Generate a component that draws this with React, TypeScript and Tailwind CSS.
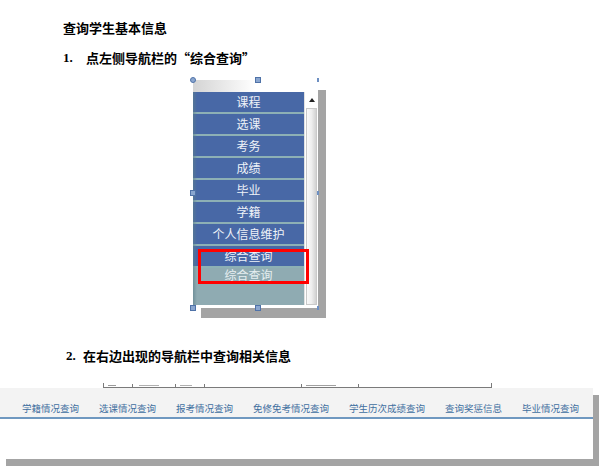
import React from "react"

const menuItems = ["课程", "选课", "考务", "成绩", "毕业", "学籍", "个人信息维护", "综合查询"]

const queryLinks = [
  "学籍情况查询",
  "选课情况查询",
  "报考情况查询",
  "免修免考情况查询",
  "学生历次成绩查询",
  "查询奖惩信息",
  "毕业情况查询",
]

function Handle({ className }: { className: string }) {
  return <div className={`absolute w-[6px] h-[6px] bg-[#8aa6cf] border border-[#4f72a8] ${className}`} />
}

function NavPicture() {
  return (
    <div className="relative ml-[193px] mt-[15px] w-[125px] h-[228px] bg-white shadow-[8px_10px_0_#a4a4a4]">
      {/* white strip above the menu */}
      <div className="h-[12px] bg-gradient-to-r from-[#d4d4d4] via-white to-white" />
      <div className="flex h-[213px]">
        {/* menu column */}
        <div className="relative w-[111px] flex flex-col bg-[#8fabb2]">
          {menuItems.map((item) => (
            <div
              key={item}
              className="h-[22px] border-b-2 border-[#8db0b5] bg-[#4868a6] flex items-center justify-center text-[12px] leading-[20px] text-[#eef2f8]"
            >
              {item}
            </div>
          ))}
          <div className="h-[13px] flex items-center justify-center text-[12px] leading-[13px] text-[#e6eef0]">
            综合查询
          </div>
          <div className="absolute left-0 top-0 bottom-0 w-[4px] bg-gradient-to-r from-[#5d7f8a] to-transparent opacity-60" />
        </div>
        {/* scrollbar */}
        <div className="w-[14px] flex flex-col bg-white border-l border-[#e2e2e2]">
          <div className="h-[16px] flex items-center justify-center">
            <div className="w-0 h-0 border-l-[3px] border-r-[3px] border-b-[4px] border-l-transparent border-r-transparent border-b-[#222]" />
          </div>
          <div className="flex-1 mx-[1px] border border-[#c9c9c9] bg-gradient-to-r from-[#fafafa] via-[#eeeeee] to-[#d2d2d2]" />
        </div>
      </div>
      {/* red highlight */}
      <div className="absolute left-[5px] top-[169px] w-[111px] h-[35px] border-[3px] border-[#ff0000]" />
      {/* selection handles */}
      <Handle className="-left-[3px] -top-[3px] rounded-full" />
      <Handle className="left-[62px] -top-[3px]" />
      <div className="absolute -right-[1px] -top-[2px] w-[2px] h-[4px] bg-[#6d8fc2]" />
      <Handle className="-left-[3px] top-[110px]" />
      <div className="absolute -right-[1px] top-[111px] w-[2px] h-[4px] bg-[#6d8fc2]" />
      <Handle className="-left-[3px] -bottom-[3px]" />
      <Handle className="left-[62px] -bottom-[3px]" />
      <div className="absolute -right-[1px] -bottom-[2px] w-[2px] h-[4px] bg-[#6d8fc2]" />
    </div>
  )
}

export default function App() {
  return (
    <div
      className="w-[600px] h-[470px] bg-white overflow-hidden text-black"
      style={{ fontFamily: '"Noto Sans CJK SC", "Liberation Sans", sans-serif' }}
    >
      <div className="pt-[20px] pl-[63px]">
        <p className="text-[13px] leading-[15px] font-bold">查询学生基本信息</p>
        <p className="mt-[15px] flex items-center text-[13px] leading-[15px] font-bold">
          <span className="w-[23px] font-['Liberation_Serif',serif]">1.</span>
          <span>点左侧导航栏的“综合查询”</span>
        </p>
      </div>

      <NavPicture />

      <p className="mt-[40px] ml-[66px] flex items-center text-[13px] leading-[15px] font-bold">
        <span className="w-[17px] font-['Liberation_Serif',serif]">2.</span>
        <span>在右边出现的导航栏中查询相关信息</span>
      </p>

      {/* cut-off edge of the page above the query bar */}
      <div className="mt-[20px] ml-[103px] w-[389px] h-[5px] flex items-end border-b-[1.5px] border-x border-[#7a7a7a]">
        <div className="ml-[4px] w-[8px] h-[1px] mb-[1px] bg-[#9a9a9a]" />
        <div className="ml-[16px] w-[1px] h-[3px] bg-[#7a7a7a]" />
        <div className="ml-[6px] w-[20px] h-[1px] mb-[1px] bg-[#b0b0b0]" />
        <div className="ml-[16px] w-[1px] h-[3px] bg-[#7a7a7a]" />
        <div className="ml-[4px] w-[12px] h-[1px] mb-[1px] bg-[#b0b0b0]" />
        <div className="ml-[12px] w-[1px] h-[3px] bg-[#7a7a7a]" />
        <div className="ml-[96px] w-[1px] h-[3px] bg-[#7a7a7a]" />
        <div className="ml-[4px] w-[30px] h-[1px] mb-[1px] bg-[#a0a0a0]" />
        <div className="ml-[22px] w-[1px] h-[3px] bg-[#7a7a7a]" />
      </div>

      {/* query bar screenshot */}
      <div className="w-[593px] h-[71px] bg-white shadow-[6px_7px_0_#a4a4a4]">
        <div className="h-[31px] bg-[#f3f3f3] border-b-2 border-[#6f98c0] flex items-center gap-[20px] pl-[22px] pt-[10px]">
          {queryLinks.map((link) => (
            <span key={link} className="text-[9.5px] leading-[12px] text-[#3f6f9f] whitespace-nowrap">
              {link}
            </span>
          ))}
        </div>
      </div>
    </div>
  )
}
